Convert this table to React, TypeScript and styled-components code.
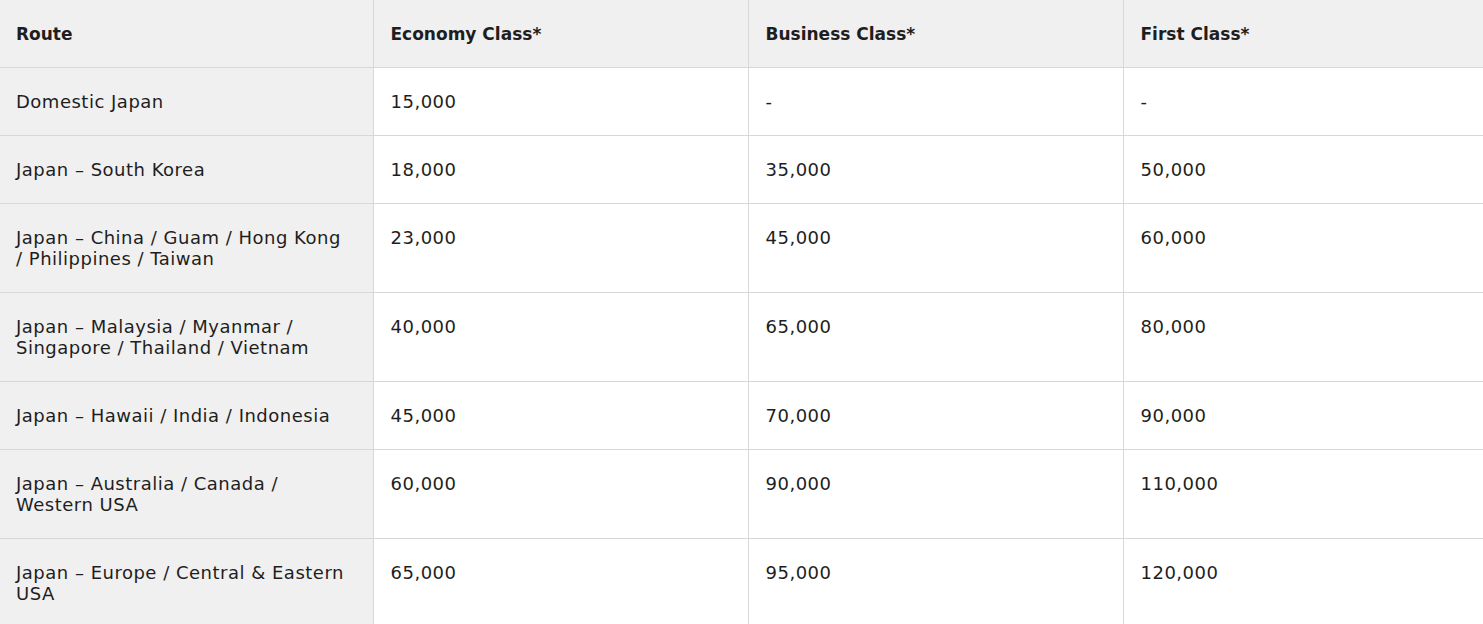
import styled, { createGlobalStyle } from 'styled-components';

const GlobalStyle = createGlobalStyle`
  html, body {
    margin: 0;
    padding: 0;
    background: #ffffff;
    overflow: hidden;
  }
  body {
    font-family: 'DejaVu Sans', 'Open Sans', sans-serif;
    color: #1e1e1e;
  }
`;

const columns = ['Route', 'Economy Class*', 'Business Class*', 'First Class*'];

const rows: string[][] = [
  ['Domestic Japan', '15,000', '-', '-'],
  ['Japan – South Korea', '18,000', '35,000', '50,000'],
  ['Japan – China / Guam / Hong Kong / Philippines / Taiwan', '23,000', '45,000', '60,000'],
  ['Japan – Malaysia / Myanmar / Singapore / Thailand / Vietnam', '40,000', '65,000', '80,000'],
  ['Japan – Hawaii / India / Indonesia', '45,000', '70,000', '90,000'],
  ['Japan – Australia / Canada / Western USA', '60,000', '90,000', '110,000'],
  ['Japan – Europe / Central & Eastern USA', '65,000', '95,000', '120,000'],
];

const Table = styled.table`
  width: 1498px;
  table-layout: fixed;
  border-collapse: collapse;
  font-size: 18px;
  line-height: 21px;
  letter-spacing: 0.5px;
`;

const Col = styled.col<{ $width: number }>`
  width: ${(p) => p.$width}px;
`;

const HeadCell = styled.th`
  background: #f1f0f0;
  text-align: left;
  font-size: 17px;
  font-weight: 700;
  letter-spacing: 0;
  padding: 24px 16px 22px 17px;
  border-left: 1px solid #d9d8d8;
  border-bottom: 1px solid #d9d8d8;
  vertical-align: top;
  &:first-child {
    border-left: none;
    padding-left: 16px;
  }
`;

const Cell = styled.td<{ $shaded?: boolean }>`
  background: ${(p) => (p.$shaded ? '#f1f0f0' : '#ffffff')};
  padding: 23px 24px 23px 17px;
  border-left: 1px solid #d9d8d8;
  border-bottom: 1px solid #d9d8d8;
  vertical-align: top;
  &:first-child {
    border-left: none;
    padding-left: 16px;
  }
`;

export default function App() {
  return (
    <>
      <GlobalStyle />
      <Table>
        <colgroup>
          <Col $width={373} />
          <Col $width={375} />
          <Col $width={375} />
          <Col $width={375} />
        </colgroup>
        <thead>
          <tr>
            {columns.map((c) => (
              <HeadCell key={c}>{c}</HeadCell>
            ))}
          </tr>
        </thead>
        <tbody>
          {rows.map((r) => (
            <tr key={r[0]}>
              {r.map((v, i) => (
                <Cell key={i} $shaded={i === 0}>
                  {v}
                </Cell>
              ))}
            </tr>
          ))}
        </tbody>
      </Table>
    </>
  );
}
